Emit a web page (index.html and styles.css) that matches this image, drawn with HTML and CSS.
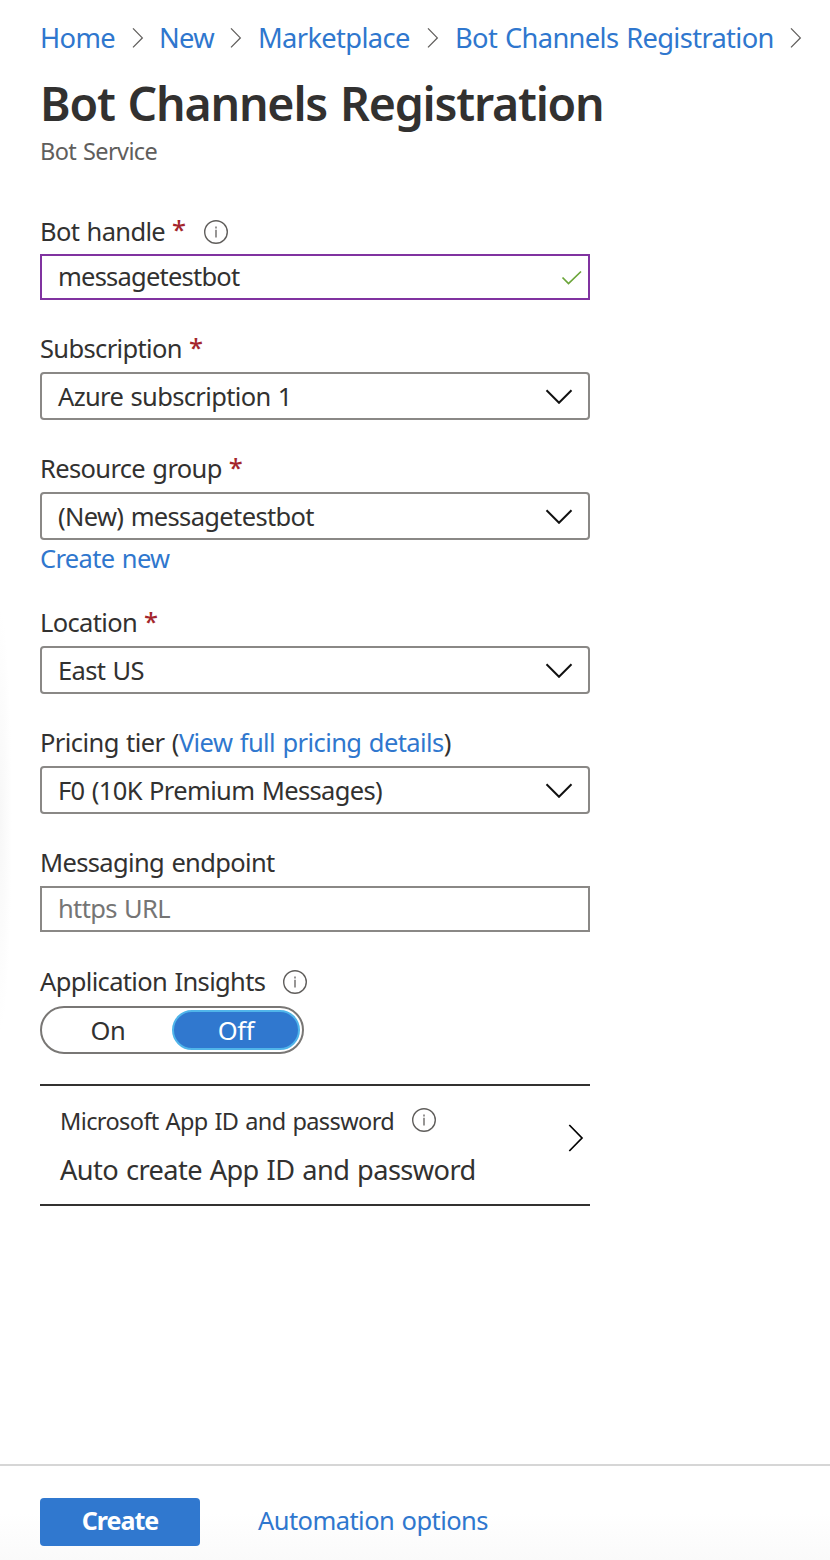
FILE: index.html
```html
<!DOCTYPE html>
<html lang="en">
<head>
<meta charset="utf-8">
<title>Bot Channels Registration</title>
<link rel="stylesheet" href="styles.css">
</head>
<body>
<svg width="0" height="0" class="sprite" aria-hidden="true">
  <symbol id="crumb" viewBox="0 0 12 22"><path d="M1 1.4 10.3 10.9 1 20.400" fill="none" stroke="#605e5c" stroke-width="1.3"/></symbol>
  <symbol id="info" viewBox="0 0 24 24"><circle cx="12" cy="12" r="11.3" fill="none" stroke="#605e5c" stroke-width="1.4"/><path d="M12 9.8v7.6M12 6.4v2" fill="none" stroke="#605e5c" stroke-width="1.3"/></symbol>
  <symbol id="down" viewBox="0 0 28 16"><path d="M1.5 2.3 14 14.800 26.500 2.300" fill="none" stroke="#111" stroke-width="2"/></symbol>
</svg>
<div class="page">
  <nav class="crumbs">
    <a class="c1">Home</a><svg><use href="#crumb"/></svg>
    <a class="c2">New</a><svg><use href="#crumb"/></svg>
    <a class="c3">Marketplace</a><svg><use href="#crumb"/></svg>
    <a class="c4">Bot Channels Registration</a><svg><use href="#crumb"/></svg>
  </nav>
  <h1 class="title">Bot Channels Registration</h1>
  <p class="subtitle">Bot Service</p>

  <main class="form">
    <section class="field handle">
      <div class="label"><span>Bot handle</span><b class="req">*</b><svg class="info"><use href="#info"/></svg></div>
      <div class="control input valid"><span>messagetestbot</span>
        <svg class="check" viewBox="0 0 22 16"><path d="M1.500 7.500 7.500 13.500 20 1.500" fill="none" stroke="#6ba539" stroke-width="1.700"/></svg></div>
    </section>
    <section class="field subscription">
      <div class="label"><span>Subscription</span><b class="req">*</b></div>
      <div class="control select"><span>Azure subscription 1</span><svg class="down"><use href="#down"/></svg></div>
    </section>
    <section class="field group">
      <div class="label"><span>Resource group</span><b class="req">*</b></div>
      <div class="control select"><span>(New) messagetestbot</span><svg class="down"><use href="#down"/></svg></div>
      <a class="create-new">Create new</a>
    </section>
    <section class="field location">
      <div class="label"><span>Location</span><b class="req">*</b></div>
      <div class="control select"><span>East US</span><svg class="down"><use href="#down"/></svg></div>
    </section>
    <section class="field pricing">
      <div class="label"><span>Pricing tier (<a>View full pricing details</a>)</span></div>
      <div class="control select"><span>F0 (10K Premium Messages)</span><svg class="down"><use href="#down"/></svg></div>
    </section>
    <section class="field endpoint">
      <div class="label"><span>Messaging endpoint</span></div>
      <div class="control input placeholder"><span>https URL</span></div>
    </section>
    <section class="field insights">
      <div class="label"><span>Application Insights</span><svg class="info"><use href="#info"/></svg></div>
      <div class="toggle"><span class="on">On</span><span class="off">Off</span></div>
    </section>
    <section class="app">
      <div class="app-text">
        <div class="app-label"><span>Microsoft App ID and password</span><svg class="info"><use href="#info"/></svg></div>
        <div class="app-value">Auto create App ID and password</div>
      </div>
      <svg class="next" viewBox="0 0 16 28"><path d="M1.300 1 14 14 1.300 27" fill="none" stroke="#000" stroke-width="1.700"/></svg>
    </section>
  </main>
  <footer class="footer">
    <button class="create">Create</button>
    <a class="automation">Automation options</a>
  </footer>
</div>
</body>
</html>
```
FILE: styles.css
```css
* { box-sizing: border-box; }
body { margin: 0; background: #fff; color: #323130; font-family: "Noto Sans", "Open Sans", sans-serif; font-size: 25.5px; letter-spacing: -0.65px; word-spacing: 1.3px; }
a { color: #2f77ce; }
svg { display: block; flex: none; }
.sprite { position: absolute; }
.page { width: 830px; height: 1560px; display: flex; flex-direction: column; overflow: hidden; white-space: nowrap;
  background: radial-gradient(ellipse 12px 210px at 0 820px, #f7f7f7, #fff) no-repeat; }
.crumbs { height: 76px; padding-left: 40px; display: flex; align-items: center; font-size: 27.3px; line-height: 38px; letter-spacing: -0.65px; }
.crumbs svg { width: 12px; height: 22px; }
.c1 { width: 92px; }
.c2, .c3, .c4 { margin-left: 15px; }
.c2 { width: 71px; }
.c3 { width: 169px; padding-left: 1px; box-sizing: content-box; }
.c4 { width: 335px; padding-left: 1px; box-sizing: content-box; }
.title { margin: 0; padding-left: 40px; height: 60px; font-size: 46.5px; line-height: 54px; font-weight: 600; letter-spacing: -1.2px; word-spacing: 2px; }
.subtitle { margin: 0; padding-left: 40px; height: 84px; font-size: 23.5px; line-height: 31px; letter-spacing: -0.6px; color: #605e5c; }
.form { width: 550px; margin-left: 40px; flex: 1; }
.label { display: flex; height: 34px; line-height: 20px; }
.label .info { margin-left: 20px; }
.handle .label { line-height: 22px; }
.req { color: #a4262c; font-weight: 500; margin-left: 7px; width: 12px; line-height: 18px; }
.info { width: 24px; height: 24px; }
.control { display: flex; align-items: center; justify-content: space-between; border: 2px solid #8a8886; padding-left: 16px; background: #fff; }
.input { height: 46px; padding-bottom: 2px; }
.valid { border-color: #8033a0; letter-spacing: -0.78px; }
.check { width: 22px; height: 16px; margin: 3px 5px 0 0; }
.select { height: 48px; border-radius: 4px; padding-right: 15px; }
.down { width: 28px; height: 16px; }
.placeholder { color: #757575; }
.handle { height: 118px; }
.subscription { height: 120px; }
.group { height: 154px; }
.location, .pricing { height: 120px; }
.pricing .label { letter-spacing: -0.58px; }
.endpoint { height: 120px; }
.insights { height: 112px; }
.insights .label { line-height: 19px; }
.insights .info { margin: -2px 0 0 18px; }
.create-new { display: block; line-height: 36px; }
.toggle { width: 264px; height: 48px; border: 2px solid #797775; border-radius: 24px; padding: 2px; display: flex; text-align: center; line-height: 40px; letter-spacing: -0.4px; }
.on { flex: 1; }
.off { width: 128px; background: #3078cf; border: 2px solid #50b5ea; border-radius: 20px; color: #fff; line-height: 36px; }
.app { height: 122px; border-top: 2px solid #323130; border-bottom: 2px solid #323130; display: flex; justify-content: space-between; padding: 18px 6px 0 20px; }
.app-label { display: flex; font-size: 23.5px; line-height: 34px; height: 44px; letter-spacing: -0.6px; }
.app-label .info { margin: 4px 0 0 18px; }
.app-value { font-size: 27.2px; line-height: 44px; letter-spacing: -0.58px; }
.next { width: 16px; height: 28px; margin-top: 20px; }
.footer { height: 96px; border-top: 2px solid #d6d6d6; padding: 32px 40px 0; display: flex; background: linear-gradient(#fff 50%, #fafafa); line-height: 45px; }
.create { width: 160px; height: 48px; border: 0; border-radius: 4px; background: #3078cf; color: #fff; font: 700 25px/44px "Noto Sans", sans-serif; letter-spacing: -1px; padding: 0 0 4px; }
.automation { margin-left: 58px; letter-spacing: -0.56px; }
```
